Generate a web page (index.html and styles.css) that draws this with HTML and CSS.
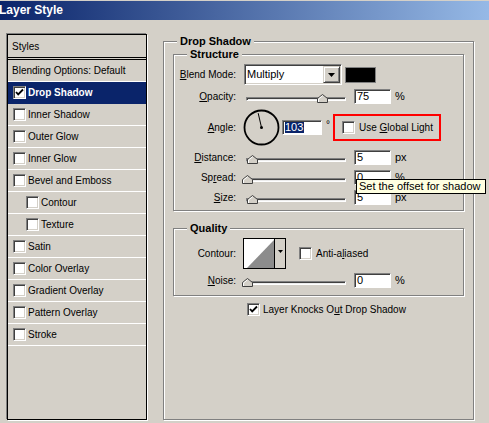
FILE: index.html
```html
<!DOCTYPE html>
<html>
<head>
<meta charset="utf-8">
<title>Layer Style</title>
<link rel="stylesheet" href="styles.css">
</head>
<body>
<div class="titlebar"><span class="title-text">Layer Style</span></div>
<div class="main">
  <div class="list">
    <div class="item head">Styles</div>
    <div class="item plain">Blending Options: Default</div>
    <div class="item sel"><span class="cb on"><svg width="9" height="9" viewBox="0 0 9 9"><polyline points="1,4 3.2,6.4 8,1.5" fill="none" stroke="#000" stroke-width="1.8"/></svg></span>Drop Shadow</div>
    <div class="item"><span class="cb"></span>Inner Shadow</div>
    <div class="item"><span class="cb"></span>Outer Glow</div>
    <div class="item"><span class="cb"></span>Inner Glow</div>
    <div class="item"><span class="cb"></span>Bevel and Emboss</div>
    <div class="item sub"><span class="cb"></span>Contour</div>
    <div class="item sub"><span class="cb"></span>Texture</div>
    <div class="item"><span class="cb"></span>Satin</div>
    <div class="item"><span class="cb"></span>Color Overlay</div>
    <div class="item"><span class="cb"></span>Gradient Overlay</div>
    <div class="item"><span class="cb"></span>Pattern Overlay</div>
    <div class="item"><span class="cb"></span>Stroke</div>
  </div>

  <div class="content">
    <div class="group outer">
      <div class="legend">Drop Shadow</div>

      <div class="group inner structure">
        <div class="legend">Structure</div>

        <div class="row r-blend">
          <span class="lbl"><u>B</u>lend Mode:</span>
          <div class="select">
            <span class="select-text">Multiply</span>
            <span class="select-btn"><svg width="7" height="4" viewBox="0 0 7 4"><polygon points="0,0 7,0 3.5,4" fill="#000"/></svg></span>
          </div>
          <span class="swatch"></span>
        </div>

        <div class="row r-field">
          <span class="lbl"><u>O</u>pacity:</span>
          <div class="slider"><div class="track"><span class="thumb" style="left:75px"><svg width="11" height="9" viewBox="0 0 11 9"><polygon points="0.5,8.5 0.5,4.5 5.5,0.5 10.5,4.5 10.5,8.5" fill="#d4d0c8" stroke="#404040"/><polyline points="1.5,8 1.5,5 5.5,1.8" fill="none" stroke="#fff"/></svg></span></div></div>
          <span class="num">75</span>
          <span class="unit">%</span>
        </div>

        <div class="row r-angle">
          <span class="lbl"><u>A</u>ngle:</span>
          <svg class="dial" width="37" height="37" viewBox="0 0 37 37">
            <circle cx="18.5" cy="18.5" r="17" fill="none" stroke="#000" stroke-width="1.8"/>
            <line x1="18.5" y1="18.5" x2="15.2" y2="4.2" stroke="#000" stroke-width="1"/>
            <circle cx="18.5" cy="18.5" r="1.5" fill="#000"/>
          </svg>
          <span class="num angle-num"><span class="hl">103</span></span>
          <span class="deg">°</span>
          <div class="mark">
            <span class="cb"></span>
            <span class="mark-text">Use <u>G</u>lobal Light</span>
          </div>
        </div>

        <div class="row r-field">
          <span class="lbl"><u>D</u>istance:</span>
          <div class="slider"><div class="track"><span class="thumb" style="left:5px"><svg width="11" height="9" viewBox="0 0 11 9"><polygon points="0.5,8.5 0.5,4.5 5.5,0.5 10.5,4.5 10.5,8.5" fill="#d4d0c8" stroke="#404040"/><polyline points="1.5,8 1.5,5 5.5,1.8" fill="none" stroke="#fff"/></svg></span></div></div>
          <span class="num">5</span>
          <span class="unit">px</span>
        </div>

        <div class="row r-field">
          <span class="lbl">Sp<u>r</u>ead:</span>
          <div class="slider"><div class="track"><span class="thumb" style="left:0px"><svg width="11" height="9" viewBox="0 0 11 9"><polygon points="0.5,8.5 0.5,4.5 5.5,0.5 10.5,4.5 10.5,8.5" fill="#d4d0c8" stroke="#404040"/><polyline points="1.5,8 1.5,5 5.5,1.8" fill="none" stroke="#fff"/></svg></span></div></div>
          <span class="num">0</span>
          <span class="unit">%</span>
        </div>

        <div class="row r-field">
          <span class="lbl"><u>S</u>ize:</span>
          <div class="slider"><div class="track"><span class="thumb" style="left:5px"><svg width="11" height="9" viewBox="0 0 11 9"><polygon points="0.5,8.5 0.5,4.5 5.5,0.5 10.5,4.5 10.5,8.5" fill="#d4d0c8" stroke="#404040"/><polyline points="1.5,8 1.5,5 5.5,1.8" fill="none" stroke="#fff"/></svg></span></div></div>
          <span class="num">5</span>
          <span class="unit">px</span>
        </div>
      </div>

      <div class="group inner quality">
        <div class="legend">Quality</div>

        <div class="row r-contour">
          <span class="lbl">Contour:</span>
          <div class="contour">
            <svg class="contour-preview" width="30" height="29" viewBox="0 0 30 29"><rect width="30" height="29" fill="#fff"/><polygon points="3,29 30,1 30,29" fill="#8c8c8c"/></svg>
            <span class="contour-btn"><svg width="5" height="3" viewBox="0 0 5 3"><polygon points="0,0 5,0 2.5,3" fill="#000"/></svg></span>
          </div>
          <span class="cb aa"></span>
          <span class="aa-text">Anti-a<u>l</u>iased</span>
        </div>

        <div class="row r-field">
          <span class="lbl"><u>N</u>oise:</span>
          <div class="slider"><div class="track"><span class="thumb" style="left:0px"><svg width="11" height="9" viewBox="0 0 11 9"><polygon points="0.5,8.5 0.5,4.5 5.5,0.5 10.5,4.5 10.5,8.5" fill="#d4d0c8" stroke="#404040"/><polyline points="1.5,8 1.5,5 5.5,1.8" fill="none" stroke="#fff"/></svg></span></div></div>
          <span class="num">0</span>
          <span class="unit">%</span>
        </div>
      </div>

      <div class="knock">
        <span class="cb on"><svg width="9" height="9" viewBox="0 0 9 9"><polyline points="1,4 3.2,6.4 8,1.5" fill="none" stroke="#000" stroke-width="1.8"/></svg></span>
        <span class="knock-text">Layer Knocks O<u>u</u>t Drop Shadow</span>
      </div>
    </div>
  </div>
</div>

<div class="tooltip">Set the offset for shadow</div>
</body>
</html>
```

FILE: styles.css
```css
* { box-sizing: border-box; }
html, body { margin: 0; padding: 0; }
body {
  width: 489px;
  height: 423px;
  overflow: hidden;
  position: relative;
  background: #d4d0c8;
  color: #000;
  font-family: "Liberation Sans", Arial, sans-serif;
  font-size: 10px;
  line-height: 13px;
}
u { text-decoration: underline; text-underline-offset: 1px; }

/* title bar */
.titlebar {
  margin-top: 1px;
  height: 19px;
  background: linear-gradient(90deg, #0a246a 0%, #96b9e6 100%);
  color: #fff;
  font-weight: bold;
  font-size: 12px;
  line-height: 19px;
}
.title-text { margin-left: -1px; }

.main {
  display: flex;
  align-items: flex-start;
  padding: 14px 0 0 7px;
}

/* styles list */
.list {
  width: 140px;
  height: 386px;
  border: 1px solid #000;
  box-shadow: -1px -1px 0 #808080, 1px 1px 0 #fff;
  flex: none;
}
.item {
  height: 22px;
  border-bottom: 1px solid #fff;
  display: flex;
  align-items: center;
  padding-left: 5px;
  gap: 1px;
  white-space: nowrap;
}
.item.head {
  height: 25px;
  border-bottom: 3px double #000;
  padding-left: 4px;
}
.item.plain { padding-left: 4px; }
.item.sub { padding-left: 18px; }
.item.sel {
  background: #0a246a;
  color: #fff;
  font-weight: bold;
  border-bottom-color: #0a246a;
}

/* checkbox */
.cb {
  width: 13px;
  height: 13px;
  flex: none;
  background: #fff;
  border: 1px solid;
  border-color: #808080 #fff #fff #808080;
  box-shadow: inset 1px 1px 0 #404040, inset -1px -1px 0 #d4d0c8;
  display: inline-flex;
  align-items: center;
  justify-content: center;
  margin-right: 1px;
}
.cb svg { display: block; }

/* right side */
.content {
  margin-left: 16px;
  flex: none;
}
.group {
  border: 1px solid #808080;
  box-shadow: 1px 1px 0 #fff, inset 1px 1px 0 #fff;
}
.group.outer {
  margin-top: 7px;
  width: 311px;
  height: 379px;
}
.legend {
  display: block;
  width: max-content;
  margin: -7px 0 0 13px;
  padding: 0 3px;
  height: 13px;
  line-height: 13px;
  background: #d4d0c8;
  font-weight: bold;
  font-size: 11px;
  position: relative;
}
.group.inner {
  width: 291px;
  margin-left: 9px;
}
.structure { margin-top: 6px; padding-bottom: 5px; }
.quality { margin-top: 17px; padding-bottom: 7px; }

.row {
  display: flex;
  align-items: center;
  white-space: nowrap;
}
.lbl {
  width: 62px;
  margin-right: 6px;
  text-align: right;
  flex: none;
}

.r-blend { height: 21px; margin-top: 3px; }
.r-field { height: 15px; margin-top: 5px; }
.structure .r-blend + .r-field { margin-top: 4px; }
.r-angle { height: 36px; margin-top: 5px; }
.r-contour { height: 31px; margin-top: 3px; }
.quality .r-field { margin-top: 4px; }

/* select */
.select {
  margin-left: 2px;
  width: 98px;
  height: 21px;
  background: #fff;
  border: 1px solid;
  border-color: #808080 #fff #fff #808080;
  box-shadow: inset 1px 1px 0 #404040, inset -1px -1px 0 #d4d0c8;
  display: flex;
  align-items: center;
  padding: 1px 1px 1px 2px;
  font-size: 11px;
}
.select-text { flex: 1; }
.select-btn {
  width: 17px;
  height: 17px;
  background: #d4d0c8;
  border: 1px solid;
  border-color: #d4d0c8 #404040 #404040 #d4d0c8;
  box-shadow: inset 1px 1px 0 #fff, inset -1px -1px 0 #808080;
  display: flex;
  align-items: center;
  justify-content: center;
}
.select-btn svg { display: block; }
.swatch {
  margin-left: 3px;
  width: 31px;
  height: 16px;
  background: #000;
  border: 1px solid #808080;
}

/* slider */
.slider {
  width: 104px;
  height: 15px;
  padding-left: 4px;
  margin-right: 8px;
  flex: none;
}
.track {
  position: relative;
  margin-top: 8px;
  width: 100px;
  height: 4px;
  background: #ececec;
  border: 1px solid;
  border-color: #808080 #fff #fff #808080;
  box-shadow: inset 1px 1px 0 #404040;
}
.thumb {
  position: absolute;
  top: -4px;
  margin-left: -5px;
  width: 11px;
  height: 9px;
}
.thumb svg { display: block; }

/* number field */
.num {
  width: 37px;
  height: 15px;
  background: #fff;
  border: 1px solid;
  border-color: #808080 #fff #fff #808080;
  box-shadow: inset 1px 1px 0 #404040;
  padding-left: 2px;
  line-height: 13px;
  flex: none;
  font-size: 11px;
}
.unit { margin-left: 4px; font-size: 11px; }

/* angle */
.dial { display: block; flex: none; margin-left: 1px; }
.angle-num { width: 40px; margin-left: 2px; }
.hl { background: #0a246a; color: #fff; padding: 0 1px 0 0; display: inline-block; line-height: 11px; }
.deg { margin-left: 4px; margin-top: -6px; }
.mark {
  margin-left: 3px;
  width: 108px;
  height: 27px;
  border: 2px solid #ff0000;
  display: flex;
  align-items: center;
  padding-left: 7px;
}
.mark-text { margin-left: 3px; }

/* contour */
.contour {
  margin-left: 1px;
  width: 43px;
  height: 31px;
  border: 1px solid #000;
  display: flex;
  flex: none;
  background: #d4d0c8;
}
.contour-preview { display: block; border-right: 1px solid #000; width: 31px; }
.contour-btn {
  flex: 1;
  display: flex;
  justify-content: center;
  padding-top: 11px;
}
.contour-btn svg { display: block; }
.cb.aa { margin-left: 13px; }
.aa-text { margin-left: 3px; }

/* knock out */
.knock {
  margin: 7px 0 0 83px;
  display: flex;
  align-items: center;
  height: 13px;
  white-space: nowrap;
}
.knock-text { margin-left: 2px; }

/* tooltip */
.tooltip {
  position: absolute;
  left: 356px;
  top: 179px;
  width: 130px;
  height: 15px;
  background: #ffffe1;
  border: 1px solid #000;
  padding-left: 2px;
  font-size: 11px;
  line-height: 13px;
  white-space: nowrap;
}
```
